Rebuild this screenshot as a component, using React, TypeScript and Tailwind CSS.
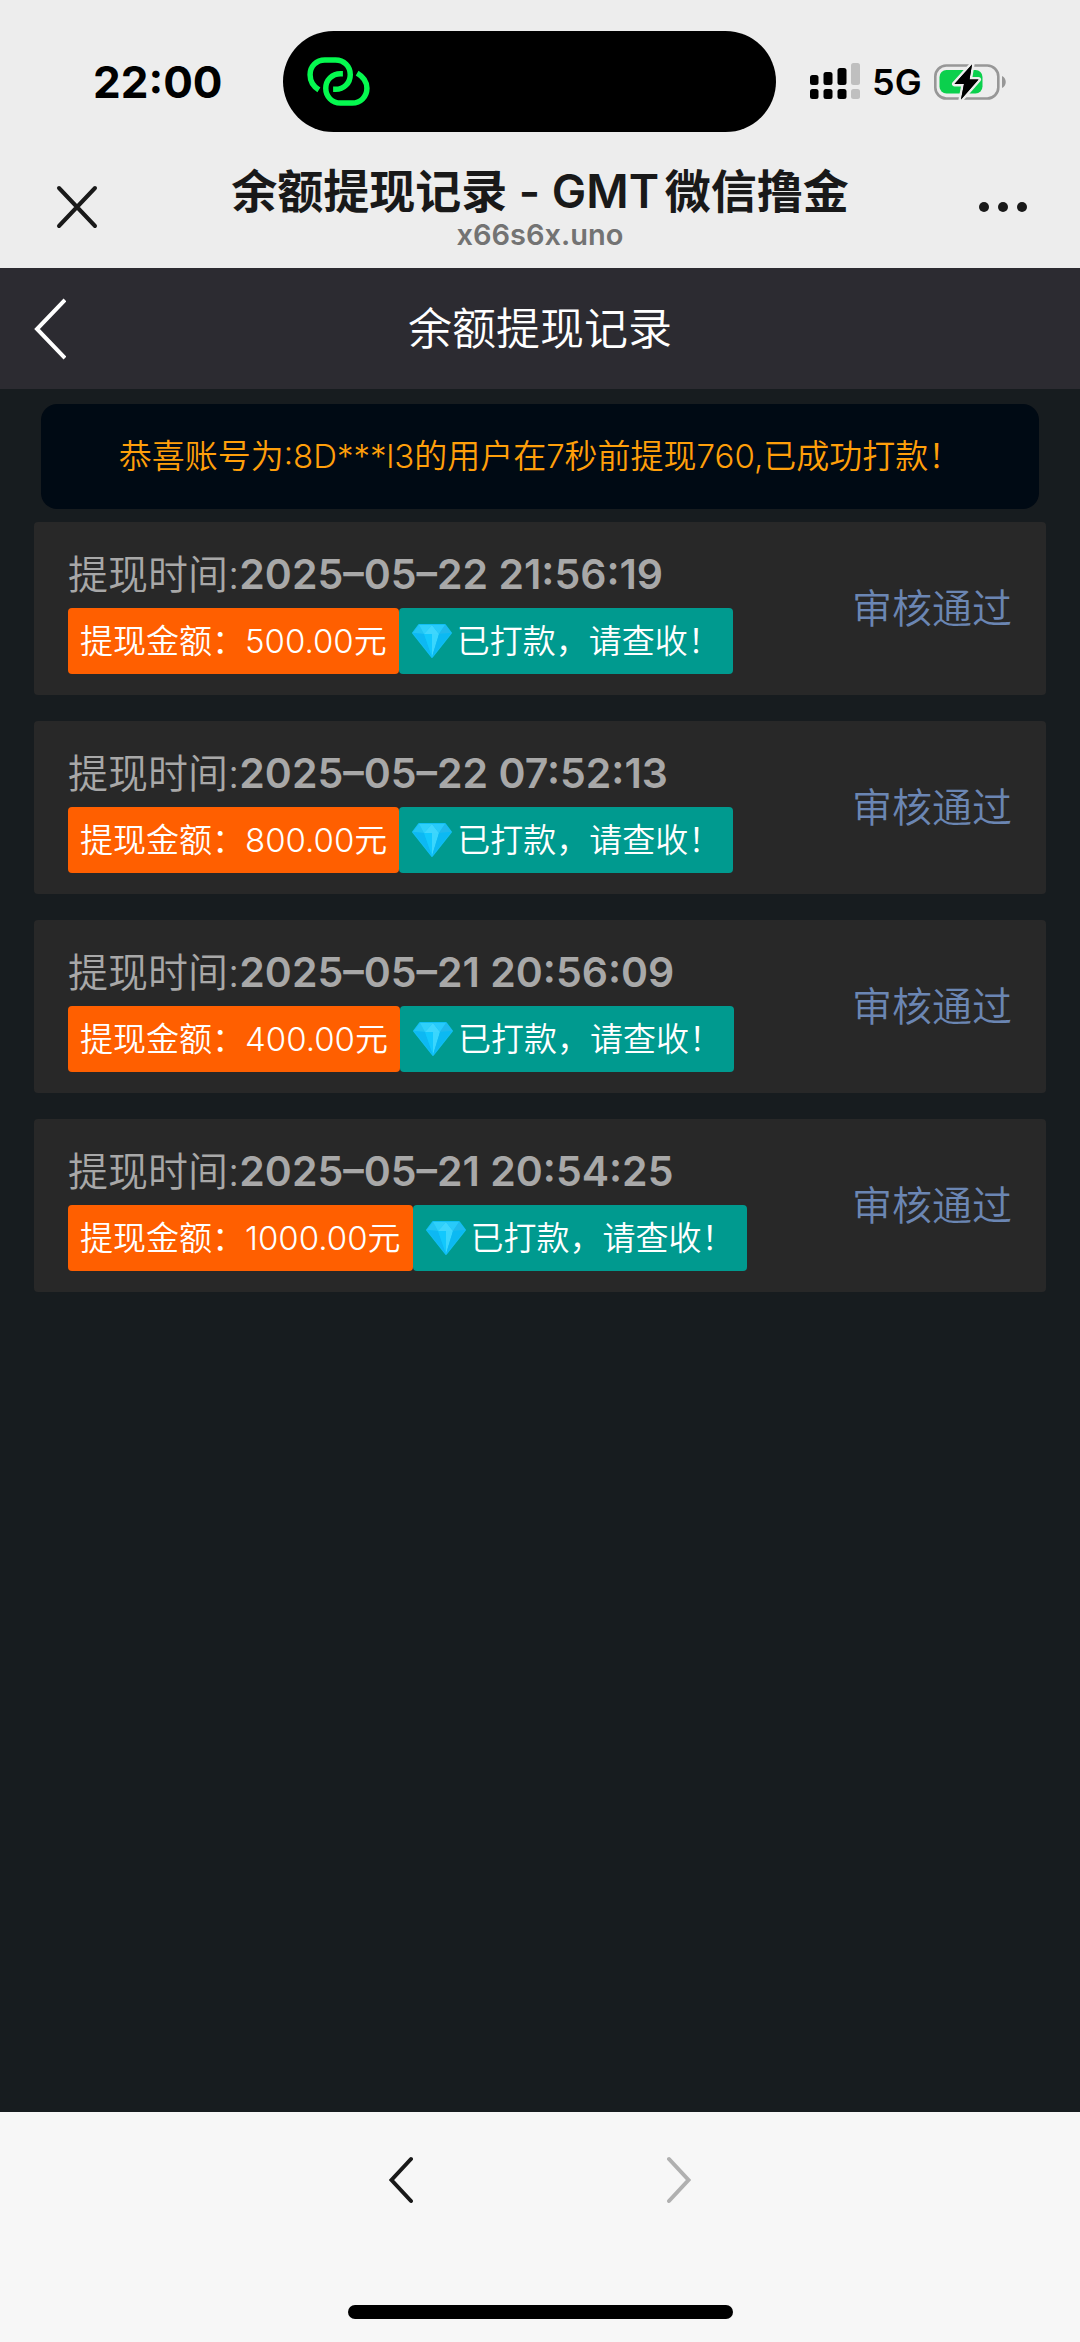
import React from "react";

const records = [
  { id: 1, time: "2025–05–22 21:56:19", amount: "500.00" },
  { id: 2, time: "2025–05–22 07:52:13", amount: "800.00" },
  { id: 3, time: "2025–05–21 20:56:09", amount: "400.00" },
  { id: 4, time: "2025–05–21 20:54:25", amount: "1000.00" },
];

const LinkIcon: React.FC = () => (
  <svg width="63" height="49" viewBox="0 0 64 50" fill="none" stroke="#05f94f" strokeWidth="5.6">
    <path d="M12 33.500 C6.500 30 3 24.500 3 18 C3 9.500 9.500 3 18 3 H29 C37.500 3 44 9.500 44 18 C44 26.500 37.500 33 29 33 H26.500" />
    <path d="M51 16.500 C57 20 61 25.500 61 32 C61 40.500 54.500 47 46 47 H34 C25.500 47 19 40.500 19 32 C19 23.500 25.500 17 34 17 H36.500" />
  </svg>
);

const SignalIcon: React.FC = () => (
  <svg width="50" height="37" viewBox="0 0 50 37">
    <rect x="0" y="12" width="8.500" height="10" rx="2.500" />
    <rect x="13.500" y="9" width="9" height="13" rx="2.500" />
    <rect x="27.500" y="5" width="9" height="17" rx="2.500" />
    <rect x="41" y="0" width="9" height="22" rx="2.500" fill="#bfbfbf" />
    <rect x="0" y="26" width="8.500" height="10" rx="2.500" />
    <rect x="13.500" y="26" width="9" height="10" rx="2.500" />
    <rect x="27.500" y="26" width="9" height="10" rx="2.500" />
    <rect x="41" y="26" width="9" height="10" rx="2.500" fill="#bfbfbf" />
  </svg>
);

const BatteryIcon: React.FC = () => (
  <svg width="73" height="36" viewBox="0 0 73 36">
    <rect x="1.300" y="1.500" width="63" height="33" rx="11" fill="none" stroke="#979797" strokeWidth="2.600" />
    <path d="M68 12 C73 14 73 22 68 24 Z" fill="#979797" />
    <rect x="5.500" y="6" width="43" height="23.500" rx="7" fill="#0bd04d" />
    <path
      d="M38 0.500 L20.500 20 H30 L27 35.500 L44.500 15.500 H35.500 Z"
      fill="#000"
      stroke="#ededed"
      strokeWidth="5"
      strokeLinejoin="round"
      paintOrder="stroke"
    />
    <path d="M38 0.500 L20.500 20 H30 L27 35.500 L44.500 15.500 H35.500 Z" fill="#000" />
  </svg>
);

const DiamondIcon: React.FC = () => (
  <svg width="42" height="36" viewBox="0 0 42 36" className="shrink-0">
    <path d="M8 2 H34 L40 10 L21 34 L2 10 Z" fill="#10bff5" stroke="#10bff5" strokeWidth="2" strokeLinejoin="round" />
    <path d="M8 2 L13 11 L2 10 Z" fill="#22c4f2" />
    <path d="M8 2 H21 L13 11 Z" fill="#2fd0fa" />
    <path d="M21 2 L28 11 H13 Z" fill="#3fd6fd" />
    <path d="M21 2 H34 L28 11 Z" fill="#28cafa" />
    <path d="M34 2 L40 10 L28 11 Z" fill="#20b9ec" />
    <path d="M2 10 L13 11 L21 34 Z" fill="#0db8f3" />
    <path d="M13 11 H21 V34 Z" fill="#12c8fd" />
    <path d="M21 11 H28 L21 34 Z" fill="#3ad6fd" />
    <path d="M28 11 L40 10 L21 34 Z" fill="#0cb9f2" />
  </svg>
);

const App: React.FC = () => {
  return (
    <div className="flex flex-col min-h-screen bg-[#171c1f] font-['Inter','Noto_Sans_CJK_SC',sans-serif]">
      {/* Status bar + browser title */}
      <header className="bg-[#ededed] pt-[31px]">
        <div className="flex items-center h-[101px]">
          <time className="w-[283px] pl-[93px] text-[44px] leading-none font-bold text-black">22:00</time>
          <div className="flex items-center w-[493px] h-full pl-6 rounded-full bg-black">
            <LinkIcon />
          </div>
          <div className="flex flex-1 items-center pl-[34px] gap-3">
            <SignalIcon />
            <span className="text-[36px] leading-none font-semibold text-black">5G</span>
            <BatteryIcon />
          </div>
        </div>

        <div className="flex items-center justify-between h-[136px] px-[53px] pt-[14px]">
          <button type="button" aria-label="关闭" className="w-12 h-12 flex items-center justify-center">
            <svg width="42" height="44" viewBox="0 0 42 44" stroke="#191919" strokeWidth="4" strokeLinecap="round">
              <path d="M3 3 L39 41 M39 3 L3 41" />
            </svg>
          </button>
          <div className="flex flex-col items-center">
            <h1 className="text-[46px] leading-[56px] font-semibold text-[#191919] [text-autospace:normal]">
              余额提现记录 - GMT微信撸金
            </h1>
            <p className="text-[29px] leading-8 font-semibold text-[#737373]">x66s6x.uno</p>
          </div>
          <button type="button" aria-label="更多" className="w-12 h-12 flex items-center justify-center">
            <svg width="48" height="12" viewBox="0 0 48 12" fill="#191919">
              <circle cx="5" cy="6" r="5" />
              <circle cx="24" cy="6" r="5" />
              <circle cx="43" cy="6" r="5" />
            </svg>
          </button>
        </div>
      </header>

      {/* Page header */}
      <nav className="flex items-center justify-between h-[121px] px-[34px] bg-[#2c2b31]">
        <button type="button" aria-label="返回" className="w-8">
          <svg width="32" height="62" viewBox="0 0 32 62" fill="none" stroke="#fff" strokeWidth="4">
            <path d="M31 2 L3 31 L31 60" />
          </svg>
        </button>
        <h2 className="text-[44px] leading-none font-[350] text-white">余额提现记录</h2>
        <span className="w-8" />
      </nav>

      <main className="flex-1 px-[34px] pt-[15px]">
        <p className="mx-[7px] mb-[13px] py-7 rounded-2xl bg-[#000a14] text-center text-[33px] leading-[49px] font-[350] text-[#ff9f0a]">
          恭喜账号为:8D***l3的用户在7秒前提现760,已成功打款！
        </p>

        <ul className="flex flex-col gap-[26px]">
          {records.map((record) => (
            <li key={record.id} className="flex items-center justify-between px-[34px] pt-[22px] pb-[21px] rounded-sm bg-[#282828]">
              <div>
                <p className="mb-[2px] text-[40px] leading-[62px] font-[350] text-[#a8a8a8]">
                  提现时间:
                  <b className="text-[41px] leading-none font-semibold">{record.time}</b>
                </p>
                <div className="flex text-[33px] leading-[66px] font-[350] text-white">
                  <span className="px-3 rounded-sm bg-[#ff5f00]">提现金额：{record.amount}元</span>
                  <span className="flex items-center gap-1 px-3 rounded-sm bg-[#009a8f]">
                    <DiamondIcon />
                    已打款，请查收！
                  </span>
                </div>
              </div>
              <span className="text-[40px] leading-[62px] font-[350] text-[#6b86b3]">审核通过</span>
            </li>
          ))}
        </ul>
      </main>

      {/* Browser toolbar */}
      <footer className="flex flex-col items-center bg-[#f7f7f7] pt-11 pb-[23px]">
        <div className="flex gap-[254px]">
          <button type="button" aria-label="后退">
            <svg width="24" height="48" viewBox="0 0 24 48" fill="none" stroke="#191919" strokeWidth="4" strokeLinecap="round">
              <path d="M22 3 L2.500 24 L22 45" />
            </svg>
          </button>
          <button type="button" aria-label="前进">
            <svg width="24" height="48" viewBox="0 0 24 48" fill="none" stroke="#b0b0b0" strokeWidth="4" strokeLinecap="round">
              <path d="M2 3 L21.500 24 L2 45" />
            </svg>
          </button>
        </div>
        <div className="mt-[101px] w-[385px] h-[14px] rounded-full bg-black" />
      </footer>
    </div>
  );
};

export default App;
